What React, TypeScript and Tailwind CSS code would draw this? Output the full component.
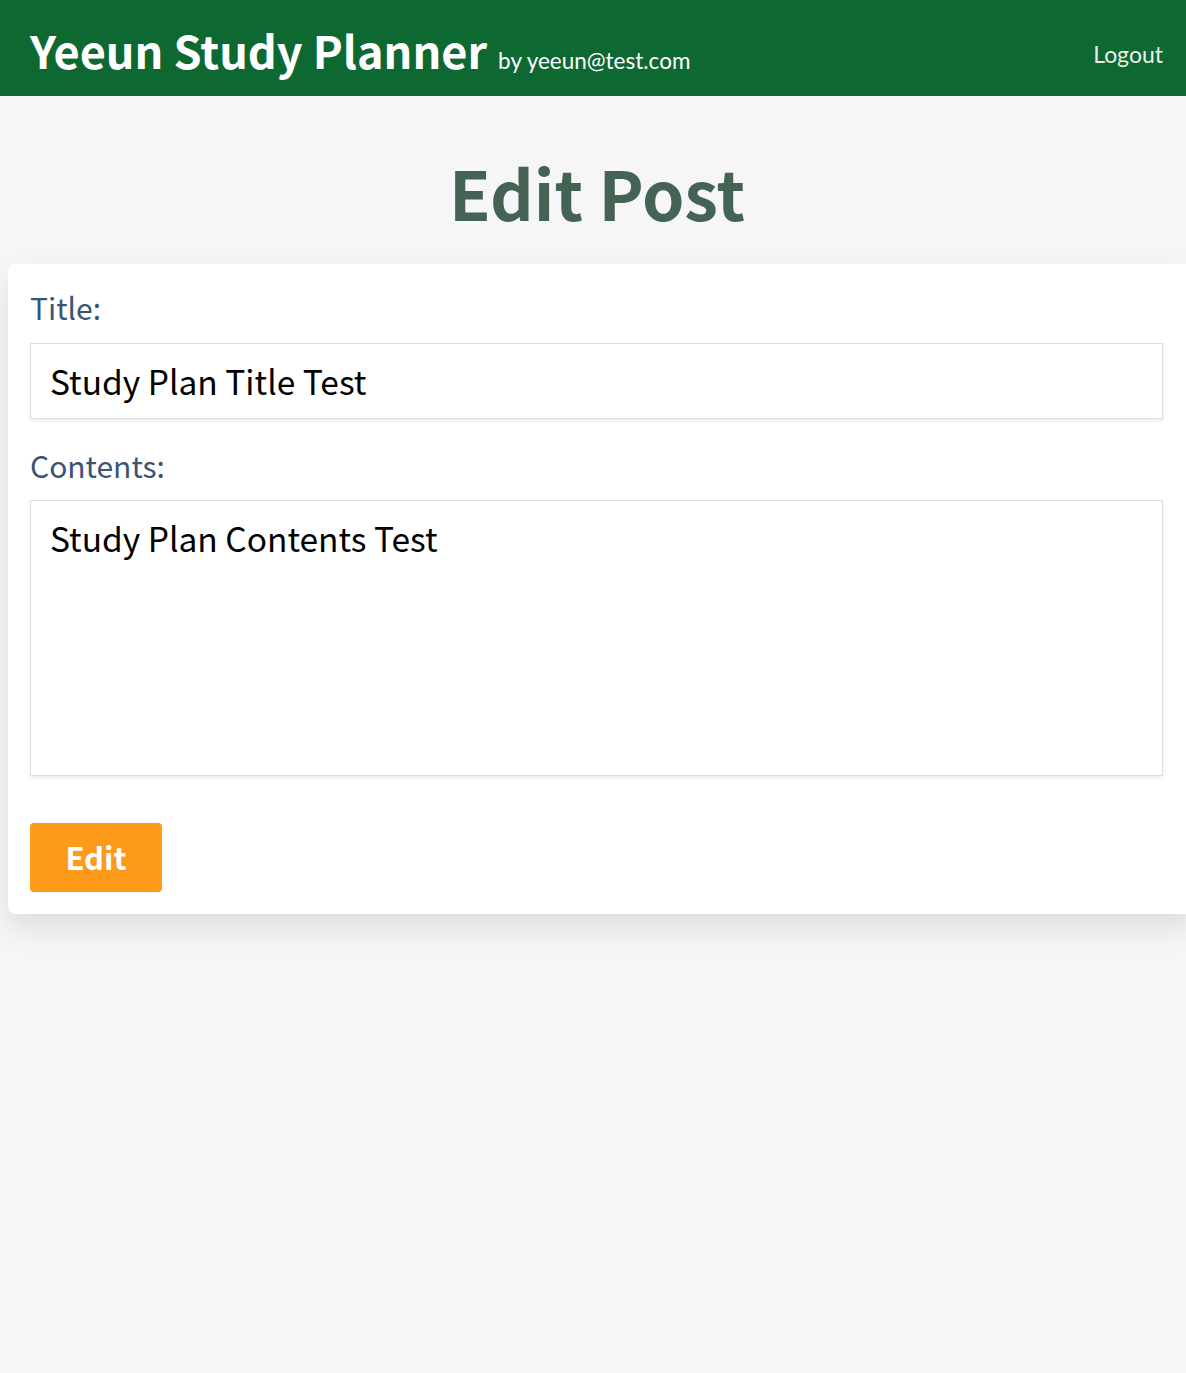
import React from "react";

const ss = { fontFamily: '"Noto Sans CJK KR", "Noto Sans", sans-serif' };
const lato = { fontFamily: 'Lato, "Noto Sans", sans-serif' };

export default function App() {
  return (
    <div className="min-h-[1373px] bg-[#f6f6f8] overflow-hidden" style={ss}>
      <header className="h-[96px] bg-[#0e6832] flex items-center justify-between pl-[30px] pr-[23px]">
        <div className="flex items-baseline gap-[11px] pt-[3px]">
          <span className="text-white font-bold text-[45px] leading-none">Yeeun Study Planner</span>
          <span className="text-white text-[22.5px] leading-none" style={lato}>by yeeun@test.com</span>
        </div>
        <span className="text-[#e8f0ea] text-[23px] leading-none pt-[12px]" style={lato}>Logout</span>
      </header>
      <h1 className="text-center text-[#456354] font-bold text-[68px] leading-none pt-[62px] pb-[38px] pl-[8px]">Edit Post</h1>
      <div className="ml-[8px] w-[1186px] bg-white rounded-[8px] shadow-[0_14px_30px_rgba(0,0,0,0.1)] px-[22px] pt-[28px] pb-[22px]">
        <div className="text-[#3a5573] text-[30px] leading-none mb-[21px]">Title:</div>
        <div className="w-[1133px] h-[76px] border border-[#d9dfe6] shadow-[0_2px_4px_rgba(0,0,0,0.08)] flex items-center px-[19px] text-black text-[33.5px]">Study Plan Title Test</div>
        <div className="text-[#3a5573] text-[30px] leading-none mt-[31px] mb-[20px]">Contents:</div>
        <div className="w-[1133px] h-[276px] border border-[#d9dfe6] shadow-[0_2px_4px_rgba(0,0,0,0.08)] px-[19px] pt-[12px] text-black text-[33.5px]">Study Plan Contents Test</div>
        <button className="mt-[47px] w-[132px] h-[69px] bg-[#fd9a1a] rounded-[4px] text-white font-bold text-[31px] flex items-center justify-center">Edit</button>
      </div>
    </div>
  );
}
